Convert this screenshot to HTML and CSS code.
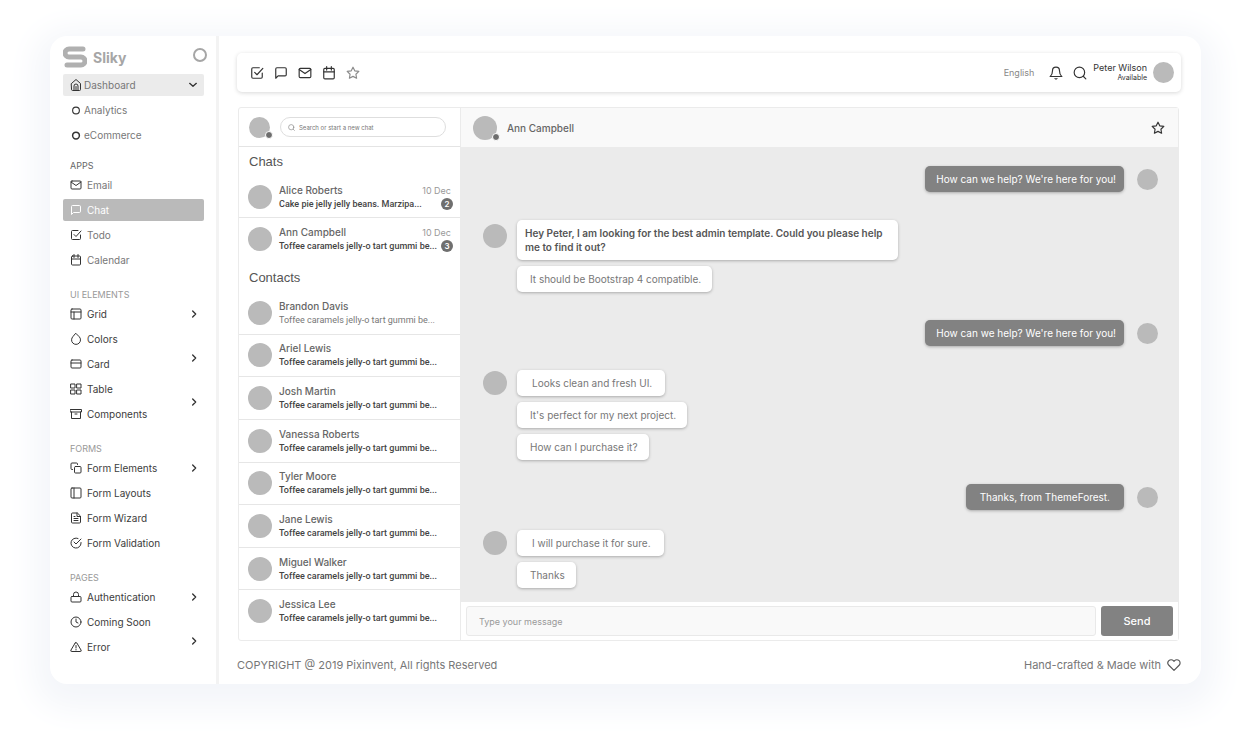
FILE: index.html
```html
<!DOCTYPE html>
<html lang="en">
<head>
<meta charset="utf-8">
<title>Sliky Chat</title>
<link rel="stylesheet" href="styles.css">
</head>
<body>
<svg class="sprite" aria-hidden="true">
  <symbol id="home" viewBox="0 0 24 24"><path d="M3 9l9-8 9 8v12a2 2 0 0 1-2 2H5a2 2 0 0 1-2-2z"/><path d="M8 23v-9a4 4 0 0 1 8 0v9M12 15v8"/></symbol>
  <symbol id="ring" viewBox="0 0 24 24"><circle cx="12" cy="12" r="9"/></symbol>
  <symbol id="mail" viewBox="0 0 24 24"><rect x="2" y="4" width="20" height="16" rx="2"/><path d="M2 6l10 7 10-7"/></symbol>
  <symbol id="chat" viewBox="0 0 24 24"><path d="M21 15a2 2 0 0 1-2 2H7l-4 4V5a2 2 0 0 1 2-2h14a2 2 0 0 1 2 2z"/></symbol>
  <symbol id="check" viewBox="0 0 24 24"><path d="M8 11l4 4L22 4"/><path d="M21 12v7a2 2 0 0 1-2 2H5a2 2 0 0 1-2-2V5a2 2 0 0 1 2-2h11"/></symbol>
  <symbol id="calendar" viewBox="0 0 24 24"><rect x="3" y="4" width="18" height="18" rx="2"/><path d="M8 1v6M16 1v6M3 10h18"/></symbol>
  <symbol id="star" viewBox="0 0 24 24"><path d="M12 2l3 6.300 7 1-5 4.800 1.200 6.900L12 17.800 5.800 21 7 14.100 2 9.300l7-1z"/></symbol>
  <symbol id="grid" viewBox="0 0 24 24"><rect x="2" y="2" width="20" height="20" rx="2"/><path d="M2 8h20M8 22V8"/></symbol>
  <symbol id="drop" viewBox="0 0 24 24"><path d="M12 2l6.400 6.400a9 9 0 1 1-12.800 0z" transform="translate(0 -1)"/></symbol>
  <symbol id="card" viewBox="0 0 24 24"><rect x="2" y="4" width="20" height="16" rx="2"/><path d="M2 10h20"/></symbol>
  <symbol id="table" viewBox="0 0 24 24"><path d="M2 2h8v8H2zM14 2h8v8h-8zM14 14h8v8h-8zM2 14h8v8H2z"/></symbol>
  <symbol id="archive" viewBox="0 0 24 24"><path d="M21 8v13H3V8M1 3h22v5H1zM10 12h4"/></symbol>
  <symbol id="copy" viewBox="0 0 24 24"><rect x="9" y="9" width="13" height="13" rx="2"/><path d="M5 15H4a2 2 0 0 1-2-2V4a2 2 0 0 1 2-2h9a2 2 0 0 1 2 2v1"/></symbol>
  <symbol id="columns" viewBox="0 0 24 24"><rect x="2" y="2" width="20" height="20" rx="2"/><path d="M8 2v20"/></symbol>
  <symbol id="file" viewBox="0 0 24 24"><path d="M14 2H5a2 2 0 0 0-2 2v16a2 2 0 0 0 2 2h14a2 2 0 0 0 2-2V9z"/><path d="M14 2v7h7M16 13H8M16 17H8M10 9H8"/></symbol>
  <symbol id="valid" viewBox="0 0 24 24"><path d="M22 11v1a10 10 0 1 1-6-9.100"/><path d="M22 4L12 14l-4-4"/></symbol>
  <symbol id="lock" viewBox="0 0 24 24"><rect x="2" y="11" width="20" height="11" rx="2"/><path d="M7 11V7a5 5 0 0 1 10 0v4"/></symbol>
  <symbol id="clock" viewBox="0 0 24 24"><circle cx="12" cy="12" r="10"/><path d="M12 6v6l4 2"/></symbol>
  <symbol id="alert" viewBox="0 0 24 24"><path d="M10.300 4L2 18a2 2 0 0 0 1.700 3h16.600a2 2 0 0 0 1.700-3L13.700 4a2 2 0 0 0-3.400 0zM12 9v5M12 17v1"/></symbol>
  <symbol id="right" viewBox="0 0 24 24"><path d="M8 3l9 9-9 9"/></symbol>
  <symbol id="down" viewBox="0 0 24 24"><path d="M2 7l10 9 10-9"/></symbol>
  <symbol id="bell" viewBox="0 0 24 24"><path d="M18 8A6 6 0 0 0 6 8c0 7-3 9-4 10h20c-1-1-4-3-4-10M13.700 21.500a2 2 0 0 1-3.400 0"/></symbol>
  <symbol id="search" viewBox="0 0 24 24"><circle cx="11" cy="11" r="9"/><path d="M22 22l-4-4"/></symbol>
  <symbol id="heart" viewBox="0 0 24 24"><path d="M20.800 4.600a5.500 5.500 0 0 0-7.800 0L12 5.700l-1-1.100a5.500 5.500 0 0 0-7.800 7.800L12 21.200l8.800-8.800a5.500 5.500 0 0 0 0-7.800z"/></symbol>
</svg>

<div class="shell">
  <aside class="sidebar">
    <div class="brand">
      <svg class="brand-logo" viewBox="0 0 24 22" aria-hidden="true"><path d="M20 3H6a4 4 0 0 0 0 8h12a4 4 0 0 1 0 8H4"/></svg>
      <span class="brand-name">Sliky</span>
      <button class="icon-button brand-toggle" aria-label="Collapse menu"><svg class="icon"><use href="#ring"/></svg></button>
    </div>
    <nav class="menu">
      <ul class="menu-list menu-list-main">
        <li><a class="menu-link menu-link-open" href="#"><svg class="icon"><use href="#home"/></svg><span>Dashboard</span><svg class="icon chevron"><use href="#down"/></svg></a></li>
        <li><a class="menu-link" href="#"><svg class="icon bullet"><use href="#ring"/></svg><span>Analytics</span></a></li>
        <li><a class="menu-link" href="#"><svg class="icon bullet bullet-bold"><use href="#ring"/></svg><span>eCommerce</span></a></li>
      </ul>

      <h2 class="menu-title menu-title-first">APPS</h2>
      <ul class="menu-list">
        <li><a class="menu-link" href="#"><svg class="icon"><use href="#mail"/></svg><span>Email</span></a></li>
        <li><a class="menu-link menu-link-active" href="#"><svg class="icon"><use href="#chat"/></svg><span>Chat</span></a></li>
        <li><a class="menu-link" href="#"><svg class="icon"><use href="#check"/></svg><span>Todo</span></a></li>
        <li><a class="menu-link" href="#"><svg class="icon"><use href="#calendar"/></svg><span>Calendar</span></a></li>
      </ul>

      <h2 class="menu-title">UI ELEMENTS</h2>
      <div class="menu-group">
        <ul class="menu-list menu-list-dark">
          <li><a class="menu-link" href="#"><svg class="icon"><use href="#grid"/></svg><span>Grid</span></a></li>
          <li><a class="menu-link" href="#"><svg class="icon"><use href="#drop"/></svg><span>Colors</span></a></li>
          <li><a class="menu-link" href="#"><svg class="icon"><use href="#card"/></svg><span>Card</span></a></li>
          <li><a class="menu-link" href="#"><svg class="icon"><use href="#table"/></svg><span>Table</span></a></li>
          <li><a class="menu-link" href="#"><svg class="icon"><use href="#archive"/></svg><span>Components</span></a></li>
        </ul>
        <div class="menu-toggles">
          <button class="icon-button" aria-label="Expand Grid"><svg class="icon chevron"><use href="#right"/></svg></button>
          <button class="icon-button" aria-label="Expand Card"><svg class="icon chevron"><use href="#right"/></svg></button>
          <button class="icon-button" aria-label="Expand Components"><svg class="icon chevron"><use href="#right"/></svg></button>
        </div>
      </div>

      <h2 class="menu-title">FORMS</h2>
      <div class="menu-group">
        <ul class="menu-list menu-list-dark">
          <li><a class="menu-link" href="#"><svg class="icon"><use href="#copy"/></svg><span>Form Elements</span></a></li>
          <li><a class="menu-link" href="#"><svg class="icon"><use href="#columns"/></svg><span>Form Layouts</span></a></li>
          <li><a class="menu-link" href="#"><svg class="icon"><use href="#file"/></svg><span>Form Wizard</span></a></li>
          <li><a class="menu-link" href="#"><svg class="icon"><use href="#valid"/></svg><span>Form Validation</span></a></li>
        </ul>
        <div class="menu-toggles">
          <button class="icon-button" aria-label="Expand Form Elements"><svg class="icon chevron"><use href="#right"/></svg></button>
        </div>
      </div>

      <h2 class="menu-title">PAGES</h2>
      <div class="menu-group">
        <ul class="menu-list menu-list-dark">
          <li><a class="menu-link" href="#"><svg class="icon"><use href="#lock"/></svg><span>Authentication</span></a></li>
          <li><a class="menu-link" href="#"><svg class="icon"><use href="#clock"/></svg><span>Coming Soon</span></a></li>
          <li><a class="menu-link" href="#"><svg class="icon"><use href="#alert"/></svg><span>Error</span></a></li>
        </ul>
        <div class="menu-toggles">
          <button class="icon-button" aria-label="Expand Authentication"><svg class="icon chevron"><use href="#right"/></svg></button>
          <button class="icon-button" aria-label="Expand Error"><svg class="icon chevron"><use href="#right"/></svg></button>
        </div>
      </div>
    </nav>
  </aside>

  <main class="content">
    <header class="navbar">
      <div class="navbar-tools">
        <button class="icon-button" aria-label="Todo"><svg class="icon"><use href="#check"/></svg></button>
        <button class="icon-button" aria-label="Chat"><svg class="icon"><use href="#chat"/></svg></button>
        <button class="icon-button" aria-label="Email"><svg class="icon"><use href="#mail"/></svg></button>
        <button class="icon-button" aria-label="Calendar"><svg class="icon"><use href="#calendar"/></svg></button>
        <button class="icon-button icon-button-light" aria-label="Bookmarks"><svg class="icon"><use href="#star"/></svg></button>
      </div>
      <a class="language" href="#">English</a>
      <button class="icon-button" aria-label="Notifications"><svg class="icon"><use href="#bell"/></svg></button>
      <button class="icon-button" aria-label="Search"><svg class="icon"><use href="#search"/></svg></button>
      <div class="account"><span class="account-name">Peter Wilson</span><span class="account-status">Available</span></div>
      <span class="avatar avatar-small"></span>
    </header>

    <section class="chat">
      <div class="threads">
        <div class="threads-head">
          <span class="avatar avatar-small online"></span>
          <label class="search"><svg class="icon"><use href="#search"/></svg><input class="search-input" type="text" placeholder="Search or start a new chat" aria-label="Search or start a new chat"></label>
        </div>
        <h3 class="threads-title">Chats</h3>
        <ul class="thread-list">
          <li class="thread"><span class="avatar"></span><div class="thread-text"><span class="thread-name">Alice Roberts</span><span class="thread-last">Cake pie jelly jelly beans. Marzipa...</span></div><div class="thread-meta"><span class="thread-date">10 Dec</span><span class="count">2</span></div></li>
          <li class="thread"><span class="avatar"></span><div class="thread-text"><span class="thread-name">Ann Campbell</span><span class="thread-last">Toffee caramels jelly-o tart gummi be...</span></div><div class="thread-meta"><span class="thread-date">10 Dec</span><span class="count">3</span></div></li>
        </ul>
        <h3 class="threads-title threads-title-next">Contacts</h3>
        <ul class="thread-list thread-list-fill">
          <li class="thread"><span class="avatar"></span><div class="thread-text"><span class="thread-name">Brandon Davis</span><span class="thread-last thread-last-read">Toffee caramels jelly-o tart gummi be...</span></div></li>
          <li class="thread"><span class="avatar"></span><div class="thread-text"><span class="thread-name">Ariel Lewis</span><span class="thread-last">Toffee caramels jelly-o tart gummi be...</span></div></li>
          <li class="thread"><span class="avatar"></span><div class="thread-text"><span class="thread-name">Josh Martin</span><span class="thread-last">Toffee caramels jelly-o tart gummi be...</span></div></li>
          <li class="thread"><span class="avatar"></span><div class="thread-text"><span class="thread-name">Vanessa Roberts</span><span class="thread-last">Toffee caramels jelly-o tart gummi be...</span></div></li>
          <li class="thread"><span class="avatar"></span><div class="thread-text"><span class="thread-name">Tyler Moore</span><span class="thread-last">Toffee caramels jelly-o tart gummi be...</span></div></li>
          <li class="thread"><span class="avatar"></span><div class="thread-text"><span class="thread-name">Jane Lewis</span><span class="thread-last">Toffee caramels jelly-o tart gummi be...</span></div></li>
          <li class="thread"><span class="avatar"></span><div class="thread-text"><span class="thread-name">Miguel Walker</span><span class="thread-last">Toffee caramels jelly-o tart gummi be...</span></div></li>
          <li class="thread"><span class="avatar"></span><div class="thread-text"><span class="thread-name">Jessica Lee</span><span class="thread-last">Toffee caramels jelly-o tart gummi be...</span></div></li>
        </ul>
      </div>

      <div class="conversation">
        <header class="conversation-head">
          <span class="avatar online"></span>
          <h1 class="conversation-name">Ann Campbell</h1>
          <button class="icon-button" aria-label="Star conversation"><svg class="icon"><use href="#star"/></svg></button>
        </header>
        <div class="messages">
          <div class="turn turn-own"><div class="bubbles"><p class="bubble">How can we help? We're here for you!</p></div><span class="avatar avatar-small"></span></div>
          <div class="turn turn-long space-large"><span class="avatar"></span><div class="bubbles"><p class="bubble bubble-long">Hey Peter, I am looking for the best admin template. Could you please help me to find it out?</p><p class="bubble">It should be Bootstrap 4 compatible.</p></div></div>
          <div class="turn turn-own space-large"><div class="bubbles"><p class="bubble">How can we help? We're here for you!</p></div><span class="avatar avatar-small"></span></div>
          <div class="turn space-medium"><span class="avatar"></span><div class="bubbles"><p class="bubble bubble-roomy">Looks clean and fresh UI.</p><p class="bubble">It's perfect for my next project.</p><p class="bubble">How can I purchase it?</p></div></div>
          <div class="turn turn-own space-medium"><div class="bubbles"><p class="bubble bubble-roomy">Thanks, from ThemeForest.</p></div><span class="avatar avatar-small"></span></div>
          <div class="turn space-small"><span class="avatar"></span><div class="bubbles"><p class="bubble bubble-roomy">I will purchase it for sure.</p><p class="bubble">Thanks</p></div></div>
        </div>
        <form class="composer">
          <input class="composer-input" type="text" placeholder="Type your message" aria-label="Type your message">
          <button class="send" type="button">Send</button>
        </form>
      </div>
    </section>

    <footer class="footer">
      <span>COPYRIGHT @ 2019 Pixinvent, All rights Reserved</span>
      <span class="made">Hand-crafted &amp; Made with <svg class="icon"><use href="#heart"/></svg></span>
    </footer>
  </main>
</div>
</body>
</html>
```
FILE: styles.css
```css
* { box-sizing: border-box; }
body, h1, h2, h3, p, ul { margin: 0; padding: 0; }
ul { list-style: none; }
a { color: inherit; text-decoration: none; }
button, input { font-family: inherit; border: 0; padding: 0; background: none; }
input:focus { outline: none; }

body {
  min-height: 100vh;
  padding: 36px 50px 64px;
  background: #fff;
  color: #555;
  font-family: Inter, "Liberation Sans", sans-serif;
  font-size: 10px;
}
.sprite { display: none; }
.icon {
  display: block;
  flex: none;
  width: 12px;
  height: 12px;
  fill: none;
  stroke: currentColor;
  stroke-width: 2;
  stroke-linecap: round;
  stroke-linejoin: round;
}
.icon-button { display: flex; align-items: center; justify-content: center; color: #333; cursor: pointer; }
.avatar { position: relative; flex: none; width: 24px; height: 24px; border-radius: 50%; background: #bababa; }
.avatar-small { width: 21px; height: 21px; }
.online::after {
  content: "";
  position: absolute;
  right: -3px;
  bottom: -1px;
  width: 6px;
  height: 6px;
  border: 1px solid #fff;
  border-radius: 50%;
  background: #6d6d6d;
}

.shell {
  display: flex;
  min-height: calc(100vh - 100px);
  border-radius: 17px;
  background: #fff;
  box-shadow: 0 9px 32px 16px #f4f6fa;
}

/* Sidebar */
.sidebar { flex: none; width: 169px; padding: 10px 12px 24px 13px; border-right: 3px solid #f3f3f3; }
.brand { display: flex; align-items: center; height: 22px; margin-bottom: 6px; color: #a6a6a6; }
.brand-logo { width: 24px; height: 22px; fill: none; stroke: #b0b0b0; stroke-width: 5; stroke-linecap: round; }
.brand-name { margin-left: 6px; font-size: 14px; font-weight: 700; }
.brand-toggle { margin: 0 -4px 4px auto; color: #a6a6a6; }
.brand-toggle .icon { width: 16px; height: 16px; stroke-width: 3; }
.menu-list { display: flex; flex-direction: column; gap: 3px; flex: 1; }
.menu-link {
  display: flex;
  align-items: center;
  gap: 5px;
  height: 22px;
  padding: 0 7px;
  border-radius: 2px;
  color: #777;
  white-space: nowrap;
}
.menu-link .icon { color: #333; }
.menu-list-main .menu-link { gap: 2px; }
.menu-link-open { background: #ebebeb; }
.menu-link .chevron { margin-left: auto; }
.chevron { width: 8px; height: 8px; stroke-width: 4; }
.menu-link .bullet { width: 12px; height: 9px; stroke-width: 3; }
.menu-link .bullet-bold { stroke-width: 4; }
.menu-link-active, .menu-link-active .icon { color: #fff; }
.menu-link-active { background: #bababa; }
.menu-list-dark .menu-link { color: #3c3c3c; }
.menu-title { height: 16px; margin-top: 16px; padding-left: 7px; color: #999; font-size: 9px; font-weight: 400; line-height: 16px; }
.menu-title-first { margin-top: 12px; color: #666; }
.menu-group { display: flex; }
.menu-toggles { display: flex; flex-direction: column; gap: 22px; padding-right: 6px; }
.menu-toggles .icon-button { height: 22px; }

/* Main column */
.content { display: flex; flex: 1; flex-direction: column; min-width: 0; padding: 17px 20px 11px 18px; }
.navbar {
  display: flex;
  align-items: center;
  height: 39px;
  padding: 0 7px 0 13px;
  border-radius: 5px;
  background: #fff;
  box-shadow: 0 1px 4px #d8d8d8;
}
.navbar-tools { display: flex; gap: 10px; margin-right: auto; }
.navbar .icon { width: 14px; height: 14px; }
.navbar .icon-button-light { color: #8a8a8a; }
.language { margin-right: 15px; color: #888; font-size: 9px; }
.navbar > .icon-button { margin-right: 10px; }
.navbar > .icon-button + .icon-button { margin-right: 6px; }
.account { display: flex; flex-direction: column; align-items: flex-end; margin-right: 6px; color: #333; }
.account-name { font-size: 9px; line-height: 10px; }
.account-status { font-size: 7px; line-height: 9px; }

.chat {
  display: flex;
  flex: 1;
  margin: 15px 2px 0 1px;
  border: 1px solid #ebebeb;
  border-radius: 3px;
}
.threads { display: flex; flex: none; flex-direction: column; width: 222px; border-right: 1px solid #ebebeb; padding-bottom: 7px; }
.threads-head { display: flex; align-items: center; gap: 10px; height: 39px; padding: 0 14px 0 10px; border-bottom: 1px solid #e4e4e4; }
.search { display: flex; flex: 1; align-items: center; gap: 4px; height: 20px; padding: 0 7px; border: 1px solid #dedede; border-radius: 10px; color: #777; }
.search .icon { width: 7px; height: 7px; }
.search-input { flex: 1; min-width: 0; color: #777; font-size: 6px; }
.search-input::placeholder { color: #777; }
.threads-title { height: 29px; padding-left: 10px; color: #555; font: 400 13px/29px "Liberation Sans", sans-serif; }
.threads-title-next { margin-top: 3px; }
.thread-list { display: flex; flex-direction: column; }
.thread-list-fill { flex: 1; }
.thread-list-fill .thread { flex: 1; }
.thread { display: flex; align-items: center; min-height: 42px; padding: 0 7px 0 9px; border-bottom: 1px solid #e6e6e6; }
.thread:last-child { border-bottom-color: transparent; }
.thread-text { display: flex; flex: 1; flex-direction: column; min-width: 0; margin-left: 7px; white-space: nowrap; }
.thread-name { color: #666; font-weight: 500; line-height: 14px; }
.thread-last { color: #444; font-family: Roboto, sans-serif; font-size: 9px; font-weight: 500; line-height: 14px; }
.thread-last-read { color: #777; font-weight: 400; }
.thread-meta { display: flex; flex-direction: column; align-items: flex-end; color: #999; font-size: 9px; line-height: 14px; }
.thread-date { padding-right: 2px; }
.count { width: 12px; height: 12px; border-radius: 50%; background: #6f6f6f; color: #fff; font-size: 8px; font-weight: 600; line-height: 12px; text-align: center; }

.conversation { display: flex; flex: 1; flex-direction: column; min-width: 0; }
.conversation-head { display: flex; align-items: center; height: 39px; padding: 0 13px 0 12px; background: #f9f9f9; }
.conversation-name { flex: 1; margin-left: 10px; color: #666; font-size: 10px; font-weight: 500; }
.conversation-head .icon { width: 14px; height: 14px; }
.messages { display: flex; flex: 1; flex-direction: column; padding: 19px 20px 12px 22px; background: #ebebeb; }
.turn { display: flex; gap: 10px; }
.turn > .avatar { margin-top: 1px; }
.turn-long > .avatar { margin-top: 4px; }
.turn-own { align-items: center; justify-content: flex-end; gap: 13px; }
.turn-own > .avatar { margin-top: 0; }
.space-large { margin-top: 28px; }
.space-medium { margin-top: 24px; }
.space-small { margin-top: 20px; }
.bubbles { display: flex; flex-direction: column; align-items: flex-start; gap: 6px; }
.bubble {
  padding: 5px 11px 5px 13px;
  border-radius: 5px;
  background: #fff;
  color: #777;
  line-height: 16px;
  box-shadow: 0 1px 3px #aaa;
}
.bubble-roomy { padding-left: 15px; padding-right: 13px; }
.bubble-long { max-width: 381px; padding: 6px 2px 6px 8px; color: #555; font-weight: 600; line-height: 14px; }
.turn-own .bubble { padding-left: 11px; padding-right: 8px; background: #828282; color: #fff; }
.turn-own .bubble-roomy { padding-left: 14px; padding-right: 14px; }
.composer { display: flex; gap: 5px; padding: 4px 5px; background: #fff; }
.composer-input { flex: 1; min-width: 0; height: 30px; padding: 0 12px; border: 1px solid #e9e9e9; border-radius: 3px; background: #f9f9f9; font-size: 9px; }
.composer-input::placeholder { color: #999; }
.send { width: 72px; height: 30px; border-radius: 3px; background: #828282; color: #fff; font-size: 11px; font-weight: 500; }

.footer { display: flex; justify-content: space-between; padding-top: 16px; color: #777; font-size: 11px; line-height: 16px; }
.made { display: flex; align-items: center; gap: 6px; }
.made .icon { width: 14px; height: 14px; color: #555; }
```
